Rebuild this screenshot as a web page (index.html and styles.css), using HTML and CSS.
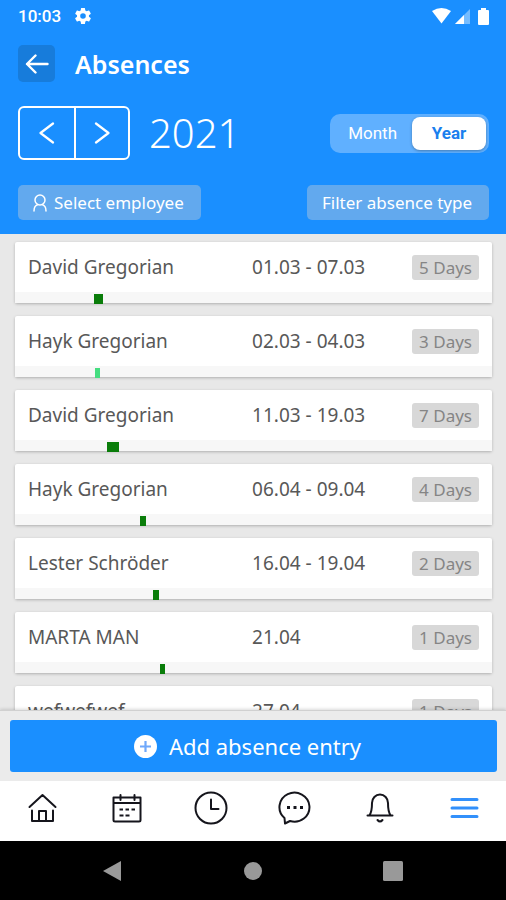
FILE: index.html
```html
<!DOCTYPE html>
<html lang="en">
<head>
  <meta charset="UTF-8">
  <meta name="viewport" content="width=device-width, initial-scale=1.0">
  <title>Absences</title>
  <link rel="stylesheet" href="styles.css">
</head>
<body>
  <header class="header">
    <div class="status-bar">
      <span class="status-time">10:03</span>
      <svg width="16" height="16" viewBox="2 2 20 20" fill="#fff" aria-hidden="true"><path d="M19.4 13a7.500 7.500 0 0 0 0-2l2.100-1.650a.5.5 0 0 0 .12-.64l-2-3.460a.5.5 0 0 0-.61-.22l-2.490 1a7.300 7.300 0 0 0-1.690-.98l-.38-2.650A.5.5 0 0 0 14 2h-4a.5.5 0 0 0-.49.42l-.38 2.650c-.61.25-1.170.59-1.690.98l-2.490-1a.5.5 0 0 0-.61.22l-2 3.460a.5.5 0 0 0 .12.64L4.570 11a7.900 7.900 0 0 0 0 2l-2.110 1.650a.5.5 0 0 0-.12.64l2 3.460c.12.22.39.3.61.22l2.490-1c.52.4 1.080.73 1.690.98l.38 2.650c.03.24.24.4.49.4h4c.25 0 .46-.16.49-.4l.38-2.650c.61-.25 1.170-.59 1.690-.98l2.490 1c.23.08.49 0 .61-.22l2-3.460a.5.5 0 0 0-.12-.64zM12 15.500a3.500 3.500 0 1 1 0-7 3.500 3.500 0 0 1 0 7z"/></svg>
      <div class="status-icons">
        <svg width="19" height="16" viewBox="0 0 19 16" fill="#fff" aria-hidden="true"><path d="M0 3Q9.500-3 19 3L9.500 15.500z"/></svg>
        <svg width="15" height="16" viewBox="0 0 15 16" fill="#fff" aria-hidden="true"><path opacity=".4" d="M0 16L15 1v15z"/><path d="M0 16L9 7v9z"/></svg>
        <svg width="11" height="17" viewBox="0 0 11 17" fill="#fff" aria-hidden="true"><path d="M3 0h5v2h2q1 0 1 1v13q0 1-1 1H1q-1 0-1-1V3q0-1 1-1h2z"/></svg>
      </div>
    </div>

    <div class="title-row">
      <button class="back-btn" aria-label="Back">
        <svg width="24" height="20" viewBox="0 0 24 20" fill="none" stroke="#fff" stroke-width="2.400" stroke-linecap="round" stroke-linejoin="round"><path d="M10.500 1.500L2 10l8.500 8.500M2 10h20.500"/></svg>
      </button>
      <h1>Absences</h1>
    </div>

    <div class="year-row">
      <div class="stepper">
        <button aria-label="Previous year">
          <svg width="16" height="22" viewBox="0 0 16 22" fill="none" stroke="#fff" stroke-width="2.200" stroke-linecap="round" stroke-linejoin="round"><path d="M14 1.500L1.500 11 14 20.500"/></svg>
        </button>
        <button aria-label="Next year">
          <svg width="16" height="22" viewBox="0 0 16 22" fill="none" stroke="#fff" stroke-width="2.200" stroke-linecap="round" stroke-linejoin="round"><path d="M2 1.500L14.500 11 2 20.500"/></svg>
        </button>
      </div>
      <span class="year">2021</span>
      <div class="segment">
        <label><input type="radio" name="range" value="month"><span>Month</span></label>
        <label><input type="radio" name="range" value="year" checked><span>Year</span></label>
      </div>
    </div>

    <div class="filter-row">
      <button class="filter-btn">
        <svg width="14" height="18" viewBox="0 0 14 18" fill="none" stroke="#fff" stroke-width="1.500" stroke-linecap="round" aria-hidden="true"><circle cx="7" cy="6" r="5"/><path d="M1 17c0-4 2-6 4-6.500M13 17c0-4-2-6-4-6.500"/></svg>
        Select employee
      </button>
      <button class="filter-btn">Filter absence type</button>
    </div>
  </header>

  <main class="list">
    <article class="card">
      <div class="card-row">
        <span class="name">David Gregorian</span>
        <span class="dates">01.03 - 07.03</span>
        <span class="days">5 Days</span>
      </div>
      <div class="track"><div class="mark" style="margin-left: 16.5%; width: 2%"></div></div>
    </article>
    <article class="card">
      <div class="card-row">
        <span class="name">Hayk Gregorian</span>
        <span class="dates">02.03 - 04.03</span>
        <span class="days">3 Days</span>
      </div>
      <div class="track"><div class="mark pending" style="margin-left: 16.8%; width: 1.1%"></div></div>
    </article>
    <article class="card">
      <div class="card-row">
        <span class="name">David Gregorian</span>
        <span class="dates">11.03 - 19.03</span>
        <span class="days">7 Days</span>
      </div>
      <div class="track"><div class="mark" style="margin-left: 19.3%; width: 2.5%"></div></div>
    </article>
    <article class="card">
      <div class="card-row">
        <span class="name">Hayk Gregorian</span>
        <span class="dates">06.04 - 09.04</span>
        <span class="days">4 Days</span>
      </div>
      <div class="track"><div class="mark" style="margin-left: 26.3%; width: 1.1%"></div></div>
    </article>
    <article class="card">
      <div class="card-row">
        <span class="name">Lester Schröder</span>
        <span class="dates">16.04 - 19.04</span>
        <span class="days">2 Days</span>
      </div>
      <div class="track"><div class="mark" style="margin-left: 29%; width: 1.1%"></div></div>
    </article>
    <article class="card">
      <div class="card-row">
        <span class="name">MARTA MAN</span>
        <span class="dates">21.04</span>
        <span class="days">1 Days</span>
      </div>
      <div class="track"><div class="mark" style="margin-left: 30.4%; width: 1.1%"></div></div>
    </article>
    <article class="card">
      <div class="card-row">
        <span class="name">wefwefwef</span>
        <span class="dates">27.04</span>
        <span class="days">1 Days</span>
      </div>
      <div class="track"><div class="mark" style="margin-left: 32%; width: 1.1%"></div></div>
    </article>
  </main>

  <div class="action-bar">
    <button class="add-btn">
      <svg width="23" height="23" viewBox="0 0 23 23" aria-hidden="true"><circle cx="11.500" cy="11.500" r="11.500" fill="#fff"/><path d="M11.500 6v11M6 11.500h11" stroke="#6fa8fb" stroke-width="2.200"/></svg>
      Add absence entry
    </button>
  </div>

  <nav class="tabs">
    <a href="#home" aria-label="Home">
      <svg width="34" height="34" viewBox="0 0 34 34"><path d="M4.500 16L17.500 4l13 12M7 19.500V30h21V19.500M14 30V20h7v10"/></svg>
    </a>
    <a href="#calendar" aria-label="Calendar">
      <svg width="34" height="34" viewBox="0 0 34 34"><path d="M4.500 6.500h27V29q0 1.500-1.500 1.500H6q-1.500 0-1.500-1.500zM4.500 12h27M11.500 4v5M25.500 4v5"/><path class="dots" d="M10.500 18.500h3.500M16.500 18.500H20M22.500 18.500H26M10.500 24.500h4M16.500 24.500h4"/></svg>
    </a>
    <a href="#time" aria-label="Time">
      <svg width="34" height="34" viewBox="0 0 34 34"><circle cx="17" cy="17" r="15.500"/><path d="M17 8.500V18h7.500"/></svg>
    </a>
    <a href="#chat" aria-label="Messages">
      <svg width="34" height="34" viewBox="0 0 34 34"><path d="M7 32.500l-.5-5.500A15 14.500 0 1 1 12 30z"/><path class="dots" d="M9 16.500h3M15.500 16.500h3M22 16.500h3" stroke-width="3"/></svg>
    </a>
    <a href="#alerts" aria-label="Notifications">
      <svg width="34" height="34" viewBox="0 0 34 34"><path d="M5.500 24.500h25M7.500 24c2-2.500 2.500-6 2.500-12a8 8.500 0 0 1 16 0c0 6 .5 9.500 2.500 12M15.500 29q2.500 3 5 0"/></svg>
    </a>
    <a class="active" href="#menu" aria-label="Menu">
      <svg width="34" height="34" viewBox="0 0 34 34"><path d="M5 8.500h25M5 17h25M5 25.500h25"/></svg>
    </a>
  </nav>

  <div class="system-bar">
    <button aria-label="System back"><svg width="20" height="22" viewBox="0 0 20 22" fill="#999"><path d="M0 11L18 1v20z"/></svg></button>
    <button aria-label="System home"><svg width="20" height="20" viewBox="0 0 20 20" fill="#999"><circle cx="10" cy="10" r="9"/></svg></button>
    <button aria-label="Recent apps"><svg width="20" height="20" viewBox="0 0 20 20" fill="#999"><rect width="20" height="20" rx="1.500"/></svg></button>
  </div>
</body>
</html>
```

FILE: styles.css
```css
* {
  box-sizing: border-box;
}

body {
  margin: 0;
  height: 100vh;
  display: flex;
  flex-direction: column;
  overflow: hidden;
  background: #e8e8e8;
  font-family: 'Noto Sans', sans-serif;
  font-size: 19px;
  color: #585858;
}

button {
  border: none;
  padding: 0;
  background: none;
  color: white;
  font: inherit;
  cursor: pointer;
}

svg {
  display: block;
}

.header {
  flex: none;
  padding: 0 17px 14px 18px;
  background: #1a8fff;
  color: white;
}

.status-bar {
  display: flex;
  align-items: center;
  gap: 14px;
  height: 32px;
}

.status-time {
  font-family: Roboto, sans-serif;
  font-size: 17px;
  font-weight: 500;
}

.status-icons {
  display: flex;
  align-items: center;
  gap: 4px;
  margin-left: auto;
}

.status-icons svg:last-child {
  margin-left: 4px;
}

.title-row {
  display: flex;
  align-items: center;
  gap: 20px;
  margin-top: 13px;
}

.back-btn {
  display: flex;
  align-items: center;
  justify-content: center;
  width: 37px;
  height: 37px;
  border-radius: 5px;
  background: #177cdb;
}

h1 {
  margin: 0;
  font-size: 25px;
  line-height: 36px;
  font-weight: 600;
}

.year-row {
  display: flex;
  align-items: center;
  margin-top: 24px;
}

.stepper {
  display: flex;
  border: 2px solid white;
  border-radius: 6px;
}

.stepper button {
  display: flex;
  align-items: center;
  justify-content: center;
  width: 54px;
  height: 50px;
}

.stepper button + button {
  border-left: 2px solid white;
}

.year {
  margin-left: 19px;
  font-size: 40px;
  line-height: 54px;
  font-weight: 300;
}

.segment {
  display: flex;
  margin-left: auto;
  padding: 3px;
  border-radius: 10px;
  background: #60b0ff;
  font-family: Roboto, sans-serif;
  font-size: 17px;
}

.segment label {
  cursor: pointer;
}

.segment input {
  position: absolute;
  opacity: 0;
}

.segment span {
  display: block;
  min-width: 74px;
  padding: 0 15px;
  border-radius: 8px;
  line-height: 33px;
  text-align: center;
}

.segment input:checked + span {
  background: white;
  color: #1a7fee;
  font-weight: 700;
  box-shadow: 0 1px 3px rgba(0, 0, 0, 0.3);
}

.filter-row {
  display: flex;
  justify-content: space-between;
  margin-top: 25px;
}

.filter-btn {
  display: flex;
  align-items: center;
  gap: 7px;
  height: 35px;
  padding: 0 17px 0 15px;
  border-radius: 5px;
  background: #62a9ee;
  font-size: 17px;
}

.list {
  flex: 1;
  min-height: 0;
  overflow: hidden;
  padding: 8px 14px 0 15px;
}

.card {
  margin-bottom: 13px;
  border-radius: 2px;
  background: white;
  box-shadow: 0 1px 3px rgba(0, 0, 0, 0.25);
}

.card-row {
  display: grid;
  grid-template-columns: 1fr 160px auto;
  align-items: center;
  height: 50px;
  padding: 0 13px;
}

.days {
  padding: 0 7px;
  border-radius: 3px;
  background: #d8d8d8;
  color: #858585;
  font-size: 17px;
  line-height: 25px;
}

.track {
  height: 11px;
  padding-top: 2px;
  background: #f7f7f7;
}

.mark {
  height: 10px;
  background: #0a7d0a;
}

.pending {
  background: #45dd80;
}

.action-bar {
  flex: none;
  padding: 9px 9px 9px 10px;
  border-top: 1px solid #d0d0d0;
  background: #ebebeb;
  box-shadow: 0 -1px 3px rgba(0, 0, 0, 0.15);
}

.add-btn {
  display: flex;
  align-items: center;
  justify-content: center;
  gap: 12px;
  width: 100%;
  height: 52px;
  padding-right: 12px;
  border-radius: 3px;
  background: #1a8fff;
  font-size: 22px;
}

.tabs {
  flex: none;
  display: grid;
  grid-template-columns: repeat(6, 1fr);
  height: 60px;
  padding-bottom: 6px;
  background: white;
}

.tabs a {
  display: flex;
  align-items: center;
  justify-content: center;
}

.tabs svg {
  fill: none;
  stroke: #15151c;
  stroke-width: 2;
  stroke-linecap: round;
  stroke-linejoin: round;
}

.tabs .dots {
  stroke-linecap: butt;
}

.tabs .active svg {
  stroke: #3290fb;
  stroke-width: 3;
}

.system-bar {
  flex: none;
  display: flex;
  align-items: center;
  justify-content: center;
  gap: 120px;
  height: 59px;
  background: black;
}
```
